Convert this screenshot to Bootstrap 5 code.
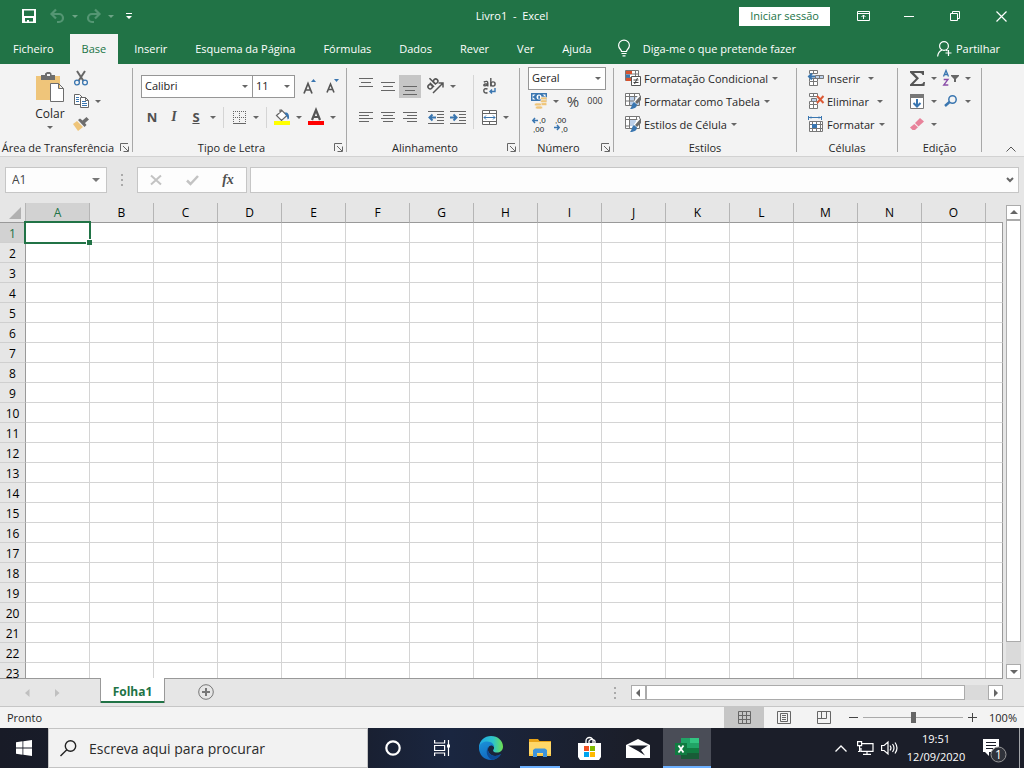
<!DOCTYPE html>
<html lang="pt">
<head>
<meta charset="utf-8">
<meta name="viewport" content="width=device-width, initial-scale=1">
<title>Livro1 - Excel</title>
<link href="https://cdn.jsdelivr.net/npm/bootstrap@5.3.0/dist/css/bootstrap.min.css" rel="stylesheet">
<style>
  :root { --xl-green: #217346; --xl-ribbon: #f3f3f3; --xl-grey: #e6e6e6; --xl-ink: #262626; }
  body { font-family: "Open Sans", "Noto Sans", sans-serif; font-size: 11px; line-height: 16px; color: var(--xl-ink); background: var(--xl-grey); overflow: hidden; }
  button, input, select { font: inherit; color: inherit; border: 0; padding: 0; background: none; }
  button:focus-visible { outline: 1px solid #666; }
  svg { display: block; flex: none; overflow: visible; }

  /* title bar and ribbon tabs */
  .xl-title { display: grid; grid-template-columns: 1fr auto 1fr; height: 34px; background: var(--xl-green); color: #fff; }
  .xl-title > * { height: 32px; }
  .xl-quick { padding-left: 18px; gap: 1px; }
  .xl-quick .xl-drop { opacity: .5; }
  .xl-quick .xl-drop::after { border-top-color: #b9d5c5; }
  .xl-undo { margin-left: 5px; }
  .xl-signin { width: 91px; height: 19px; margin-right: 10px; background: #fff; color: var(--xl-green); }
  .xl-win { width: 46px; height: 32px; display: grid; place-items: center; }
  .xl-tabs { height: 30px; background: var(--xl-green); color: #fff; padding-left: 1px; }
  .xl-tabs .nav-link { color: #fff; padding: 0 12px; line-height: 30px; margin-right: 4px; border-radius: 0; }
  .xl-tabs .nav-link.active { background: var(--xl-ribbon); color: var(--xl-green); }
  .xl-tellbox { gap: 13px; margin-left: 10px; }
  .xl-tell { width: 180px; color: #fff; }
  .xl-tell::placeholder { color: #fff; opacity: 1; }

  /* ribbon */
  .xl-ribbon { height: 93px; background: var(--xl-ribbon); border-bottom: 1px solid #d2d2d2; }
  .xl-ribbon .vr { background: #a8a8a8; opacity: 1; width: 1px; min-height: 0; }
  .xl-group { display: flex; flex-direction: column; height: 92px; padding-top: 3px; }
  .xl-group > .xl-body { height: 73px; padding-left: 8px; }
  .xl-group > .xl-body.inset { padding-left: 11px; }
  .xl-group > .xl-body.clip { padding-left: 33px; gap: 1px; }
  .xl-two { padding-top: 8px; gap: 8px; }
  .xl-row { display: flex; height: 23px; align-items: center; }
  .xl-cap { display: flex; height: 16px; text-align: center; }
  .xl-cap button { width: 16px; display: grid; place-items: center; }
  .w-clip { width: 132px; } .w-font { width: 213px; } .w-align { width: 172px; } .w-num { width: 93px; }
  .w-style { width: 182px; } .w-cell { width: 100px; } .w-edit { width: 83px; }
  .xl-tool { width: 22px; height: 23px; display: grid; place-items: center; flex: none; }
  .xl-tool.picked { background: #c6c6c6; }
  .xl-drop { width: 12px; height: 23px; display: grid; place-items: center; flex: none; }
  .xl-drop::after, .xl-caret::after { content: ""; display: block; border: solid transparent; border-width: 3px 3px 0; border-top-color: #666; }
  .xl-text { display: flex; align-items: center; gap: 3px; height: 23px; white-space: nowrap; }
  .xl-text span { padding-top: 2px; padding-right: 1px; }
  .xl-line { width: 1px; height: 21px; background: #d5d5d5; margin: 0 4px; }
  .xl-line.tall { height: 54px; margin-top: 8px; }
  .xl-combo { height: 23px; border: 1px solid #969696; border-radius: 0; padding: 0 0 0 3px; appearance: none; line-height: 20px; color: #222;
    background: #fff url("data:image/svg+xml,%3Csvg xmlns='http://www.w3.org/2000/svg' width='6' height='3'%3E%3Cpath d='M0 0h6L3 3z' fill='%23666'/%3E%3C/svg%3E") no-repeat right 4px center; }
  .c-face { width: 112px; } .c-size { width: 42px; } .c-num { width: 78px; }
  .glyph { font-size: 13px; font-weight: 700; color: #505050; }
  .g-ital { font-family: "Liberation Serif", serif; font-style: italic; font-size: 14px; }
  .g-pct { font-size: 15px; color: #444; }
  .g-sep { font-size: 9px; color: #333; }
  .g-dec { font-family: "Liberation Sans", sans-serif; font-size: 8px; fill: #222; }
  .xl-paste { width: 34px; font-size: 12px; padding-top: 5px; margin-right: 2px; }

  /* formula bar */
  .xl-fbar { height: 46px; padding: 10px 5px 10px; gap: 3px; }
  .xl-box { height: 26px; background: #fdfdfd; border: 1px solid #c6c6c6; display: flex; align-items: center; }
  .xl-box button { width: 36px; height: 24px; display: grid; place-items: center; }
  .xl-box input { min-width: 0; }
  .xl-name { width: 102px; font-size: 12px; padding-left: 6px; color: #444; }
  .xl-box .xl-drop { width: 20px; }
  .xl-name .xl-drop::after { border-width: 4px 4px 0; border-top-color: #777; }
  .xl-grip { margin: 0 11px; }

  /* sheet */
  .xl-main { min-height: 0; }
  .xl-sheet { min-height: 0; overflow: hidden; border-bottom: 1px solid #999; background: #fff; }
  .xl-grid { width: 100%; table-layout: fixed; border-collapse: separate; border-spacing: 0; font-size: 12px; line-height: 16px; color: #000; }
  .xl-rowcol { width: 26px; }
  .xl-datacol { width: 64px; }
  .xl-grid th { font-weight: 400; text-align: center; padding: 2px 0 0; background: var(--xl-grey); height: 20px; }
  .xl-grid thead th { border-right: 1px solid #b5b5b5; border-bottom: 1px solid #999; }
  .xl-grid thead th:last-child { border-right: 0; }
  .xl-grid tbody th { border-right: 1px solid #999; border-bottom: 1px solid #cfcfcf; padding-top: 3px; }
  .xl-grid td { height: 20px; padding: 0; background: #fff; border-right: 1px solid #d4d4d4; border-bottom: 1px solid #d4d4d4; position: relative; }
  .xl-grid td:last-child { border-right-color: #999; }
  .xl-grid th.hot { background: #d2d2d2; color: var(--xl-green); }
  .xl-cursor { position: absolute; inset: -2px; border: 2px solid var(--xl-green); z-index: 1; }
  .xl-cursor::after { content: ""; position: absolute; right: -3px; bottom: -3px; width: 6px; height: 6px; background: var(--xl-green); border: solid #fff; border-width: 1px 0 0 1px; }
  .xl-vscroll { width: 15px; margin: 2px 3px 0 3px; }
  .xl-sb { width: 15px; height: 15px; background: #fff; border: 1px solid #ababab; display: grid; place-items: center; flex: none; }
  .xl-thumb { background: #fff; border: 1px solid #ababab; flex: 19 1 0; }
  .xl-track { background: #dadada; flex: 1 1 0; }

  .xl-sheets { height: 28px; border-bottom: 1px solid #c6c6c6; }
  .xl-nav { padding-left: 25px; }
  .xl-sheettab { width: 65px; height: 25px; margin: -1px 33px 0 40px; padding-top: 2px; background: #fff; border: solid #999; border-width: 0 1px; box-shadow: inset 0 -2px var(--xl-green); color: var(--xl-green); font-size: 12px; font-weight: 700; position: relative; }
  .xl-newsheet { padding-bottom: 2px; }
  .xl-hscroll { width: 38%; margin-right: 21px; height: 27px; }
  .xl-hscroll .xl-thumb, .xl-hscroll .xl-track { height: 15px; }
  .xl-hscroll .xl-thumb { flex-grow: 14; }
  .xl-hgrip { margin-right: 15px; }
  .xl-status { height: 21px; background: var(--xl-ribbon); padding: 0 7px; }
  .xl-view { width: 40px; height: 21px; display: grid; place-items: center; }
  .xl-view.picked { background: #c6c6c6; }
  .xl-less { margin-left: 5px; }
  .xl-zoom { width: 100px; height: 21px; appearance: none; margin: 0 5px 0 4px; }
  .xl-zoom::-webkit-slider-runnable-track { height: 1px; background: #aaa; }
  .xl-zoom::-webkit-slider-thumb { appearance: none; width: 5px; height: 11px; margin-top: -5px; background: #666; }

  /* task bar */
  .os-bar { height: 40px; background: linear-gradient(90deg, #181b27 0, #192032 36%, #1a2640 44%, #1b1e29 62%); color: #fff; }
  .os-apps { gap: 1px; padding-left: 1px; }
  .os-btn { width: 48px; height: 40px; display: grid; place-items: center; position: relative; }
  .os-btn.open { background: linear-gradient(#6cb0ff, #6cb0ff) center bottom / 40px 2px no-repeat; }
  .os-btn.front { background: linear-gradient(#6cb0ff, #6cb0ff) center bottom / 48px 2px no-repeat, #4a4d57; }
  .os-search { width: 320px; height: 40px; background: #f2f2f2; border: 1px solid #c3c3c3; color: #222; padding-left: 11px; padding-top: 1px; }
  .os-search input { font-size: 14px; outline: 0; }
  .os-search input::placeholder { color: #2b2b2b; opacity: 1; }
  .os-tray { width: 24px; height: 40px; display: grid; place-items: center; }
  .os-clock { width: 70px; line-height: 18px; text-align: center; }
  .os-edge { height: 40px; margin: 0 4px 0 0; opacity: .6; }
</style>
</head>
<body class="d-flex flex-column vh-100">

<header class="xl-title">
  <div class="xl-quick d-flex align-items-center">
    <button class="xl-tool" aria-label="Guardar"><svg width="14" height="14"><path fill="#fff" fill-rule="evenodd" d="M0 0h14v14H0zM2 1.500V7h10V1.500zM3 9v3.500h2V11h2v1.500h4V9z"/></svg></button>
    <button class="xl-tool xl-undo" aria-label="Anular"><svg width="15" height="14" fill="none" stroke="#549673" stroke-width="2.200"><path d="M1.500 5H9a4 4 0 0 1 0 8H7M6 .5L1.500 5 6 9.500"/></svg></button>
    <button class="xl-drop" aria-label="Opções de anular"></button>
    <button class="xl-tool" aria-label="Refazer"><svg width="15" height="14" fill="none" stroke="#549673" stroke-width="2.200"><path d="M13.500 5H6a4 4 0 0 0 0 8h2M9 .5L13.500 5 9 9.500"/></svg></button>
    <button class="xl-drop" aria-label="Opções de refazer"></button>
    <button class="xl-tool" aria-label="Personalizar"><svg width="6" height="7" fill="#fff"><path d="M0 0h6v1H0zM0 3h6L3 6z"/></svg></button>
  </div>
  <div class="d-flex align-items-center">Livro1&nbsp; -&nbsp; Excel</div>
  <div class="d-flex align-items-center justify-content-end">
    <button class="xl-signin">Iniciar sessão</button>
    <button class="xl-win" aria-label="Opções do friso"><svg width="13" height="10" fill="none" stroke="#fff"><path d="M.5.5h12v9H.5zM1 2.500h11M6.500 8V4M4.500 6l2-2 2 2"/></svg></button>
    <button class="xl-win" aria-label="Minimizar"><svg width="10" height="1"><path fill="#fff" d="M0 0h10v1H0z"/></svg></button>
    <button class="xl-win" aria-label="Restaurar"><svg width="10" height="10" fill="none" stroke="#fff"><path d="M.5 2.500h7v7h-7zM2.500 2V.5h7v7H8"/></svg></button>
    <button class="xl-win" aria-label="Fechar"><svg width="11" height="11" stroke="#fff" stroke-width="1.200"><path d="M.5.5l10 10M10.500.5l-10 10"/></svg></button>
  </div>
</header>

<nav class="xl-tabs d-flex align-items-center" aria-label="Friso">
  <a class="nav-link" href="#">Ficheiro</a>
  <a class="nav-link active" href="#">Base</a>
  <a class="nav-link" href="#">Inserir</a>
  <a class="nav-link" href="#">Esquema da Página</a>
  <a class="nav-link" href="#">Fórmulas</a>
  <a class="nav-link" href="#">Dados</a>
  <a class="nav-link" href="#">Rever</a>
  <a class="nav-link" href="#">Ver</a>
  <a class="nav-link" href="#">Ajuda</a>
  <label class="xl-tellbox d-flex align-items-center">
    <svg width="12" height="17" fill="none" stroke="#fff" stroke-width="1.200"><path d="M3.500 11.500c0-2-2.900-2.800-2.900-6a5.400 5.400 0 0 1 10.800 0c0 3.200-2.900 4-2.900 6zM3.500 13.500h5M4.500 15.800h3"/></svg>
    <input class="xl-tell" type="text" placeholder="Diga-me o que pretende fazer">
  </label>
  <button class="d-flex align-items-center gap-1 ms-auto me-4"><svg width="15" height="16" fill="none" stroke="#fff" stroke-width="1.200"><circle cx="7" cy="5" r="4.400"/><path d="M.6 15.500C1 12 2.600 10 5 9M9 9l1.500 1M11.500 9v6M8.500 12h6"/></svg>Partilhar</button>
</nav>

<section class="xl-ribbon d-flex">
  <div class="xl-group w-clip">
    <div class="xl-body clip d-flex">
      <button class="xl-paste d-flex flex-column align-items-center">
        <svg width="28" height="30"><path fill="#efc57a" d="M0 4h24v24H0z"/><path fill="#6d6d6d" d="M5 3h4V1.500L11 0h3l1.500 1.500V3H19v5H5z"/><path fill="#f3f3f3" d="M11 2h3v2h-3z"/><path fill="#fff" stroke="#6d6d6d" d="M14.500 11.500h8l5 5v13h-13zM22.500 11.500v5h5"/></svg>
        <span class="pt-1">Colar</span><span class="xl-caret pt-1"></span>
      </button>
      <div>
        <div class="xl-row"><button class="xl-tool" aria-label="Cortar"><svg width="14" height="15" fill="none"><path stroke="#666" stroke-width="2" d="M3 0l6.500 10M11 0L4.500 10"/><circle cx="3" cy="11.500" r="2.400" stroke="#3a76b0" stroke-width="1.300"/><circle cx="11" cy="11.500" r="2.400" stroke="#3a76b0" stroke-width="1.300"/></svg></button></div>
        <div class="xl-row"><button class="xl-tool" aria-label="Copiar"><svg width="15" height="14" fill="#fff" stroke="#666"><path d="M.5.5h5l3 3v7h-8z"/><path d="M6.500 3.500h5l3 3v7h-8zM11.500 3.500v3h3"/><path stroke="#3a76b0" d="M2 3.500h3M2 5.500h3M2 7.500h3M8 7.500h4M8 9.500h5M8 11.500h5"/></svg></button><button class="xl-drop" aria-label="Opções de copiar"></button></div>
        <div class="xl-row"><button class="xl-tool" aria-label="Pincel de formatação"><svg width="16" height="14"><path fill="#efc57a" d="M0 7l4-3 6 6-5 4z"/><path fill="#6d6d6d" d="M5 3l2-1.500 2.500 2L13.500 0 16 2.500 12 6l1.500 2-2 2z"/></svg></button></div>
      </div>
    </div>
    <div class="xl-cap"><span class="flex-fill">Área de Transferência</span><button aria-label="Mais"><svg width="9" height="9" fill="none" stroke="#666"><path d="M.5 8V.5H8M3 3l5 5M8.500 3.500v5h-5"/></svg></button></div>
  </div>
  <div class="vr my-1"></div>

  <div class="xl-group w-font">
    <div class="xl-body xl-two d-flex flex-column">
      <div class="xl-row">
        <select class="xl-combo c-face" aria-label="Tipo de letra"><option>Calibri</option></select>
        <select class="xl-combo c-size border-start-0" aria-label="Tamanho"><option>11</option></select>
        <button class="xl-tool ms-1" aria-label="Aumentar"><svg width="14" height="15"><path fill="none" stroke="#555" stroke-width="1.700" d="M1 14.500L5 4.500l4 10M2.500 11h5"/><path fill="#3a76b0" d="M8 3l2.500-3L13 3z"/></svg></button>
        <button class="xl-tool" aria-label="Diminuir"><svg width="13" height="14"><path fill="none" stroke="#555" stroke-width="1.600" d="M1 13.500L4.500 5l3.500 8.500M2.300 10.500h4.400"/><path fill="#3a76b0" d="M8 0h5l-2.500 3z"/></svg></button>
      </div>
      <div class="xl-row">
        <button class="xl-tool glyph">N</button><button class="xl-tool glyph g-ital">I</button><button class="xl-tool glyph text-decoration-underline">S</button><button class="xl-drop" aria-label="Sublinhado"></button>
        <div class="xl-line"></div>
        <button class="xl-tool" aria-label="Limites"><svg width="13" height="13" fill="none" stroke="#666"><path stroke-dasharray="1 1" d="M0 .5h13M.5 0v13M6.500 0v13M12.500 0v13M0 6.500h13"/><path d="M0 12.500h13"/></svg></button><button class="xl-drop" aria-label="Opções de limites"></button>
        <div class="xl-line"></div>
        <button class="xl-tool" aria-label="Cor de preenchimento"><svg width="16" height="16"><path fill="#fff" stroke="#666" stroke-width="1.200" d="M2.500 6.500L8 1.500l5 5-5.500 5zM6 4V1h2"/><path fill="#3a76b0" d="M10.500 3.500c3-.5 5 1 4.500 6l-1.500 1c0-2-.5-3-1.500-4z"/><path fill="#ff0" d="M0 12h16v4H0z"/></svg></button><button class="xl-drop" aria-label="Cores de preenchimento"></button>
        <button class="xl-tool" aria-label="Cor do tipo de letra"><svg width="16" height="16"><path fill="none" stroke="#555" stroke-width="2.200" d="M4 11L8 1l4 10M5.500 8h5"/><path fill="red" d="M0 12h16v4H0z"/></svg></button><button class="xl-drop" aria-label="Cores de letra"></button>
      </div>
    </div>
    <div class="xl-cap"><span class="flex-fill">Tipo de Letra</span><button aria-label="Mais"><svg width="9" height="9" fill="none" stroke="#666"><path d="M.5 8V.5H8M3 3l5 5M8.500 3.500v5h-5"/></svg></button></div>
  </div>
  <div class="vr my-1"></div>

  <div class="xl-group w-align">
    <div class="xl-body d-flex">
      <div class="xl-two d-flex flex-column">
        <div class="xl-row">
          <button class="xl-tool" aria-label="Alinhar em cima"><svg width="14" height="17" stroke="#666"><path d="M0 .5h14M2 4.500h10M0 8.500h14"/></svg></button>
          <button class="xl-tool" aria-label="Alinhar ao meio"><svg width="14" height="9" stroke="#666"><path d="M0 .5h14M2 4.500h10M0 8.500h14"/></svg></button>
          <button class="xl-tool picked" aria-label="Alinhar em baixo"><svg width="14" height="17" stroke="#666"><path d="M0 8.500h14M2 12.500h10M0 16.500h14"/></svg></button>
          <button class="xl-tool ms-1" aria-label="Orientação"><svg width="17" height="16" fill="none" stroke="#555" stroke-width="1.500"><path d="M5 15L14.500 5.500M10.500 5h4.500v4.500"/><g transform="rotate(-45 5 8)"><circle cx="2.500" cy="6.500" r="2.200"/><path d="M5 3.500v6M8 0v9"/><circle cx="10.300" cy="6.500" r="2.200"/></g></svg></button><button class="xl-drop" aria-label="Orientações"></button>
        </div>
        <div class="xl-row">
          <button class="xl-tool" aria-label="Esquerda"><svg width="14" height="11" stroke="#666"><path d="M0 .5h14M0 3.500h10M0 6.500h14M0 9.500h10"/></svg></button>
          <button class="xl-tool" aria-label="Centro"><svg width="14" height="11" stroke="#666"><path d="M0 .5h14M2 3.500h10M0 6.500h14M2 9.500h10"/></svg></button>
          <button class="xl-tool" aria-label="Direita"><svg width="14" height="11" stroke="#666"><path d="M0 .5h14M4 3.500h10M0 6.500h14M4 9.500h10"/></svg></button>
          <button class="xl-tool ms-1" aria-label="Diminuir avanço"><svg width="16" height="13" stroke="#666"><path d="M0 .5h16M9 3.500h7M9 6.500h7M9 9.500h7M0 12.500h16"/><path fill="none" stroke="#3a76b0" stroke-width="2" d="M8 6.500H1.500M4.500 3.500l-3 3 3 3"/></svg></button>
          <button class="xl-tool" aria-label="Aumentar avanço"><svg width="16" height="13" stroke="#666"><path d="M0 .5h16M9 3.500h7M9 6.500h7M9 9.500h7M0 12.500h16"/><path fill="none" stroke="#3a76b0" stroke-width="2" d="M0 6.500h6.500M3.500 3.500l3 3-3 3"/></svg></button>
        </div>
      </div>
      <div class="xl-line tall"></div>
      <div class="xl-two d-flex flex-column">
        <div class="xl-row"><button class="xl-tool" aria-label="Moldar texto"><svg width="13" height="16" fill="none" stroke="#555" stroke-width="1.400"><path d="M.8 4Q4.800 2.300 4.800 5V8.500M4.800 5.800Q.8 5.800.8 7.200T4.800 7.200M7.800 0v8.500"/><circle cx="10" cy="6" r="2.100"/><path d="M4.500 11Q.8 10 .8 12.800T4.500 14.800"/><path stroke="#3a76b0" d="M12 10v3.500H7M9 11.500l-2 2 2 2"/></svg></button></div>
        <div class="xl-row"><button class="xl-tool" aria-label="Unir"><svg width="15" height="15" fill="#fff" stroke="#666"><path d="M.5.5h14v14H.5zM0 3.500h15M0 11.500h15M7.500 0v3M7.500 12v3"/><path fill="none" stroke="#3a76b0" d="M2 7.500h11M4 5.500l-2 2 2 2M11 5.500l2 2-2 2"/></svg></button><button class="xl-drop" aria-label="Opções de unir"></button></div>
      </div>
    </div>
    <div class="xl-cap"><span class="flex-fill">Alinhamento</span><button aria-label="Mais"><svg width="9" height="9" fill="none" stroke="#666"><path d="M.5 8V.5H8M3 3l5 5M8.500 3.500v5h-5"/></svg></button></div>
  </div>
  <div class="vr my-1"></div>

  <div class="xl-group w-num">
    <div class="xl-body">
      <div class="xl-row"><select class="xl-combo c-num" aria-label="Formato"><option>Geral</option></select></div>
      <div class="xl-row">
        <button class="xl-tool" aria-label="Moeda"><svg width="16" height="16"><path fill="#3a76b0" d="M0 0h16v8H0z"/><path fill="#fff" d="M1.500 1.500h3l-3 2.500zM14.500 1.500h-3l3 2.500zM1.500 6.500V4l3 2.500z"/><circle cx="8" cy="4" r="2.500" fill="#fff"/><path fill="#3a76b0" d="M7.300 2.800h1.700v3H7.300z"/><g fill="#efc57a" stroke="#f3f3f3" stroke-width=".6"><rect x="9.500" y="4" width="6.500" height="3" rx="1.500"/><rect x="9.500" y="6.800" width="6.500" height="3" rx="1.500"/><rect x="9.500" y="9.600" width="6.500" height="3" rx="1.500"/><rect x="3.500" y="10" width="7" height="3" rx="1.500"/><rect x="4.500" y="13" width="7" height="3" rx="1.500"/></g></svg></button><button class="xl-drop" aria-label="Moedas"></button>
        <button class="xl-tool g-pct">%</button><button class="xl-tool g-sep">000</button>
      </div>
      <div class="xl-row">
        <button class="xl-tool" aria-label="Aumentar casas decimais"><svg class="g-dec" width="15" height="15"><text x="7" y="6">,0</text><text x="1" y="15">,00</text><path fill="none" stroke="#3a76b0" stroke-width="1.500" d="M6 3.500H1M3 1L.8 3.500 3 6"/></svg></button>
        <button class="xl-tool" aria-label="Diminuir casas decimais"><svg class="g-dec" width="15" height="15"><text x="1" y="6">,00</text><text x="7" y="15">,0</text><path fill="none" stroke="#3a76b0" stroke-width="1.500" d="M0 10.500h5M3 8l2.200 2.500L3 13"/></svg></button>
      </div>
    </div>
    <div class="xl-cap"><span class="flex-fill">Número</span><button aria-label="Mais"><svg width="9" height="9" fill="none" stroke="#666"><path d="M.5 8V.5H8M3 3l5 5M8.500 3.500v5h-5"/></svg></button></div>
  </div>
  <div class="vr my-1"></div>

  <div class="xl-group w-style">
    <div class="xl-body inset">
      <button class="xl-text xl-caret"><svg width="16" height="16"><path fill="#fff" stroke="#777" d="M.5.5h13v10H.5zM0 4h14M0 7.500h14"/><path fill="#d8522e" d="M1 1h6v3H1z"/><path fill="#3a76b0" d="M1 4.500h4v3H1z"/><path fill="#d8522e" d="M1 8h5v3H1z"/><path stroke="#777" d="M10.500 0v6"/><path fill="#fff" stroke="#555" d="M6.500 6.500h9v9h-9z"/><path stroke="#444" d="M8.500 10h5M8.500 12.500h5M12.500 8l-3 6"/></svg><span>Formatação Condicional</span></button>
      <button class="xl-text xl-caret"><svg width="16" height="16"><path fill="#fff" stroke="#777" d="M.5.5h14v12H.5z"/><path fill="#bcd0ea" d="M4 4h10v8H4z"/><path stroke="#777" d="M0 3.500h15M0 8h15M4.500 0v13M9.500 0v13"/><path stroke="#fff" stroke-width="4" d="M15 3l-6 9"/><path fill="#6d6d6d" d="M16 2v5l-4 4-2-2z"/><path fill="#3a76b0" d="M9 9l3 2.500c0 3-3 4.500-7 4.500 2-1.500 1.500-5.500 4-7z"/></svg><span>Formatar como Tabela</span></button>
      <button class="xl-text xl-caret"><svg width="16" height="16"><path fill="#fff" stroke="#777" d="M.5.5h14v12H.5z"/><path fill="#bcd0ea" d="M4 4h7v6H4z"/><path fill="none" stroke="#777" d="M0 3.500h15M4.500 0v13M0 10h5M11.500 0v4"/><path stroke="#fff" stroke-width="4" d="M15 3l-6 9"/><path fill="#6d6d6d" d="M16 2v5l-4 4-2-2z"/><path fill="#3a76b0" d="M9 9l3 2.500c0 3-3 4.500-7 4.500 2-1.500 1.500-5.500 4-7z"/></svg><span>Estilos de Célula</span></button>
    </div>
    <div class="xl-cap"><span class="flex-fill">Estilos</span></div>
  </div>
  <div class="vr my-1"></div>

  <div class="xl-group w-cell">
    <div class="xl-body inset">
      <div class="xl-row"><button class="xl-text"><svg width="16" height="16" fill="#fff" stroke="#777"><path d="M1.500.5h8v3h-8zM5.500 0v3M1.500 11.500h8v4h-8zM5.500 9v6M1.500 11V8.500h8V11"/><path fill="#bcd0ea" d="M7.500 5.500h8v3h-8zM11.500 5.500v3"/><path fill="none" stroke="#3a76b0" stroke-width="2" d="M7 6.500H1M4 3.500l-3 3 3 3"/></svg><span>Inserir</span></button><button class="xl-drop ms-1" aria-label="Opções de inserir"></button></div>
      <div class="xl-row"><button class="xl-text"><svg width="16" height="16" fill="#fff" stroke="#777"><path d="M1.500.5h8v3h-8zM5.500 0v3M1.500 11.500h8v4h-8zM5.500 9v6M1.500 11V8.500h8V11"/><path fill="#bcd0ea" d="M3.500 5.500h5v3h-5z"/><path stroke="#dc5a36" stroke-width="2" d="M9 3l6.500 7M15.500 3L9 10"/></svg><span>Eliminar</span></button><button class="xl-drop ms-1" aria-label="Opções de eliminar"></button></div>
      <button class="xl-text xl-caret"><svg width="16" height="16" fill="#fff" stroke="#777"><path d="M1.500 5.500h13v10h-13zM1 8.500h14M1 12.500h14M4.500 5v11M8.500 5v11M12.500 5v11"/><path fill="#3a76b0" stroke="none" d="M4 8h5v4H4z"/><path fill="none" stroke="#3a76b0" d="M.5 0v4M13.500 0v4M1 1.500h12M3 .5l-1 1 1 1M11 .5l1 1-1 1"/></svg><span>Formatar</span></button>
    </div>
    <div class="xl-cap"><span class="flex-fill">Células</span></div>
  </div>
  <div class="vr my-1"></div>

  <div class="xl-group w-edit">
    <div class="xl-body">
      <div class="xl-row"><button class="xl-tool" aria-label="Soma"><svg width="15" height="15"><path fill="#555" d="M0 0h14v4h-1.500Q12 2 10 2H4l5 5.200L3.500 13H11q2 0 2.500-2H15l-.5 4H0v-1.500l6-6-6-6z"/></svg></button><button class="xl-drop" aria-label="Opções de soma"></button>
        <button class="xl-tool" aria-label="Ordenar e filtrar"><svg width="16" height="16" fill="none" stroke-width="1.300"><path stroke="#3a76b0" d="M.5 6.500L3 .5l2.500 6M1.500 4.500h3"/><path stroke="#8a4da8" d="M.7 9.500h4.300l-4.300 5.500h4.600"/><path fill="#666" d="M8 5h8v1l-3 3v3h-2V9L8 6z"/></svg></button><button class="xl-drop" aria-label="Opções de ordenação"></button></div>
      <div class="xl-row"><button class="xl-tool" aria-label="Preencher"><svg width="14" height="15"><path fill="#fff" stroke="#777" d="M.5.5h13v14H.5z"/><path fill="#777" d="M0 0h14v4H0z"/><path fill="none" stroke="#3a76b0" stroke-width="2" d="M7 5v7.500M3.500 9L7 12.500 10.500 9"/></svg></button><button class="xl-drop" aria-label="Opções de preencher"></button>
        <button class="xl-tool" aria-label="Localizar"><svg width="14" height="12" fill="none" stroke="#3a76b0"><circle cx="8.500" cy="4.500" r="3.700" stroke-width="1.500"/><path stroke-width="2.500" d="M5.500 7L1 11"/></svg></button><button class="xl-drop" aria-label="Opções de localizar"></button></div>
      <div class="xl-row"><button class="xl-tool" aria-label="Limpar"><svg width="14" height="13"><path fill="#e8829a" d="M5 5l5-5 4 3.500-5.500 5z"/><path fill="#e8829a" d="M4.300 6L8 9.200 5 12H2.500L0 9.500z"/></svg></button><button class="xl-drop" aria-label="Opções de limpar"></button></div>
    </div>
    <div class="xl-cap"><span class="flex-fill">Edição</span></div>
  </div>
  <div class="vr my-1"></div>
  <button class="ms-auto me-2 mt-auto pb-1" aria-label="Fechar friso"><svg width="10" height="6" fill="none" stroke="#555"><path d="M.5 5.500L5 1l4.500 4.500"/></svg></button>
</section>

<section class="xl-fbar d-flex align-items-center">
  <div class="xl-box xl-name"><input class="flex-fill" value="A1" aria-label="Caixa de nome"><button class="xl-drop" aria-label="Nomes"></button></div>
  <svg class="xl-grip" width="2" height="12" fill="#aaa"><path d="M0 0h2v2H0zM0 5h2v2H0zM0 10h2v2H0z"/></svg>
  <div class="xl-box">
    <button aria-label="Cancelar"><svg width="12" height="10" stroke="#c3c3c3" stroke-width="2"><path d="M1 .5l10 9M11 .5L1 9.500"/></svg></button>
    <button aria-label="Introduzir"><svg width="13" height="10" fill="none" stroke="#c3c3c3" stroke-width="2.500"><path d="M1 5.500L4.500 9 12 1"/></svg></button>
    <button class="glyph g-ital" aria-label="Inserir função">fx</button>
  </div>
  <div class="xl-box flex-fill"><input class="flex-fill px-2" aria-label="Barra de fórmulas"><svg class="me-1" width="8" height="6" fill="none" stroke="#666" stroke-width="2"><path d="M1 1l3 3 3-3"/></svg></div>
</section>

<main class="xl-main flex-fill d-flex">
  <div class="xl-sheet flex-fill">
    <table class="xl-grid">
      <colgroup id="cols"><col class="xl-rowcol"></colgroup>
      <thead><tr id="head"><th aria-label="Selecionar tudo"><svg class="ms-auto me-1" width="12" height="12"><path fill="#b1b1b1" d="M12 0v12H0z"/></svg></th></tr></thead>
      <tbody id="rows"></tbody>
    </table>
  </div>
  <div class="xl-vscroll d-flex flex-column">
    <button class="xl-sb" aria-label="Subir"><svg width="8" height="4"><path fill="#666" d="M0 4l4-4 4 4z"/></svg></button>
    <div class="xl-thumb"></div>
    <div class="xl-track"></div>
    <button class="xl-sb" aria-label="Descer"><svg width="8" height="4"><path fill="#666" d="M0 0l4 4 4-4z"/></svg></button>
  </div>
</main>

<section class="xl-sheets d-flex">
  <button class="xl-nav" aria-label="Folha anterior"><svg width="5" height="8"><path fill="#c0c0c0" d="M4.500 0v8L0 4z"/></svg></button>
  <button class="xl-nav" aria-label="Folha seguinte"><svg width="5" height="8"><path fill="#c0c0c0" d="M0 0v8l4.500-4z"/></svg></button>
  <button class="xl-sheettab">Folha1</button>
  <button class="xl-newsheet" aria-label="Nova folha"><svg width="16" height="16" fill="none" stroke="#777"><circle cx="8" cy="8" r="7.300"/><path stroke-width="2" d="M8 4v8M4 8h8"/></svg></button>
  <div class="xl-hscroll d-flex align-items-center ms-auto">
    <svg class="xl-hgrip" width="2" height="12" fill="#aaa"><path d="M0 0h2v2H0zM0 5h2v2H0zM0 10h2v2H0z"/></svg>
    <button class="xl-sb" aria-label="Esquerda"><svg width="4" height="8"><path fill="#666" d="M4 0v8L0 4z"/></svg></button>
    <div class="xl-thumb"></div>
    <div class="xl-track"></div>
    <button class="xl-sb" aria-label="Direita"><svg width="4" height="8"><path fill="#666" d="M0 0v8l4-4z"/></svg></button>
  </div>
</section>

<footer class="xl-status d-flex align-items-center">
  <span class="me-auto">Pronto</span>
  <button class="xl-view picked" aria-label="Normal"><svg width="13" height="13" fill="none" stroke="#666"><path d="M.5.5h12v12H.5zM4.500 0v13M8.500 0v13M0 4.500h13M0 8.500h13"/></svg></button>
  <button class="xl-view" aria-label="Esquema de página"><svg width="14" height="13" fill="none" stroke="#666"><path d="M.5.5h13v12H.5zM3.500 2.500h7v8h-7zM5 4.500h4M5 6.500h4M5 8.500h4"/></svg></button>
  <button class="xl-view" aria-label="Quebras de página"><svg width="14" height="13" fill="none" stroke="#666"><path d="M.5.5h13v12H.5zM4.500 0v7.500M9.500 0v7.500M0 7.500h9.500"/></svg></button>
  <button class="xl-less" aria-label="Reduzir"><svg width="10" height="9" stroke="#444"><path d="M0 4.500h9"/></svg></button>
  <input class="xl-zoom" type="range" min="0" max="100" value="50" aria-label="Zoom">
  <button aria-label="Ampliar"><svg width="9" height="9" stroke="#444"><path d="M0 4.500h9M4.500 0v9"/></svg></button>
  <span class="ms-2 ps-1">100%</span>
</footer>

<nav class="os-bar d-flex" aria-label="Barra de tarefas">
  <button class="os-btn" aria-label="Iniciar"><svg width="16" height="16" fill="#fff"><path d="M0 2.200L6.500 1.300V7.600H0zM7.300 1.200L16 0v7.600H7.300zM0 8.400h6.500v6.300L0 13.800zM7.300 8.400H16V16l-8.700-1.200z"/></svg></button>
  <label class="os-search d-flex align-items-center gap-2">
    <svg class="me-1" width="17" height="17" fill="none" stroke="#222" stroke-width="1.400"><circle cx="10.500" cy="6" r="5.200"/><path d="M6.800 9.800L.5 16"/></svg>
    <input class="flex-fill" type="search" placeholder="Escreva aqui para procurar">
  </label>
  <div class="os-apps d-flex">
    <button class="os-btn" aria-label="Cortana"><svg width="16" height="16" fill="none" stroke="#fff" stroke-width="2.200"><circle cx="8" cy="8" r="6.700"/></svg></button>
    <button class="os-btn" aria-label="Vista de tarefas"><svg width="16" height="16" fill="none" stroke="#fff" stroke-width="1.200"><path d="M.6 0v3h10V0M.6 16v-3h10v3M.6 5.500h10v5H.6zM14.500 0v16"/><path fill="#fff" stroke="none" d="M13 4.500h3v3h-3z"/></svg></button>
    <button class="os-btn" aria-label="Edge"><svg width="24" height="24" viewBox="0 0 24 24"><defs><linearGradient id="eg" x1="0" x2="1"><stop offset="0" stop-color="#1fa8e6"/><stop offset=".6" stop-color="#2fc5c8"/><stop offset="1" stop-color="#6ee04f"/></linearGradient><linearGradient id="eb" y1="0" y2="1" x2=".5"><stop offset="0" stop-color="#1b93d8"/><stop offset="1" stop-color="#1166bf"/></linearGradient></defs><path fill="url(#eg)" d="M0 10.500C.8 4.500 5.500 0 12 0c7 0 12 5 12 10.500 0 4-3 6-6 6-3.500 0-4.500-1.500-3.500-3C16 11.500 14.500 8 10 8c-5 0-8 3-10 6z"/><path fill="url(#eb)" d="M0 12c0-4 4-6.500 8-6.500 5 0 7 3 7 5.500-1-1.700-3-2-4.500-1-2.500 2-2 7 2 9 3 1.700 6.500 1 9.500-1-2 3.500-5.500 6-10 6C5 24 0 18.500 0 12z"/><path fill="#0d4a94" d="M9.500 10.500C6.500 14 7 21 13 23.900c4-.4 7-2.700 9-5.900-3 2-6.500 2.700-9.500 1-3.500-2-4.500-6-3-8.500z"/></svg></button>
    <button class="os-btn open" aria-label="Explorador"><svg width="22" height="20"><path fill="#e8a317" d="M0 1h9l1.500 2H22v3H0z"/><path fill="#ffd768" d="M0 4h22v14H0z"/><path fill="#fbc844" d="M0 16h22v2H0z"/><path fill="#3d94dc" d="M4 19v-7l2-1.500h10l2 1.500v7h-4v-4H8v4z"/></svg></button>
    <button class="os-btn" aria-label="Loja"><svg width="23" height="23"><path fill="none" stroke="#fff" stroke-width="1.300" d="M8 6V4a3.500 3.500 0 0 1 7 0v2M11 6V4a3.500 3.500 0 0 1 6 0v2"/><path fill="#fff" d="M0 6h23v14l-2 3H2l-2-3z"/><path fill="#f25022" d="M6 9h5v5H6z"/><path fill="#7fba00" d="M12 9h5v5h-5z"/><path fill="#00a4ef" d="M6 15h5v5H6z"/><path fill="#ffb900" d="M12 15h5v5h-5z"/></svg></button>
    <button class="os-btn" aria-label="Correio"><svg width="24" height="19"><path fill="#fff" d="M0 6l12-6 12 6v13H0z"/><path fill="#1b1e29" d="M2 6.500h20L15 11l4 5.500L12 12z"/></svg></button>
    <button class="os-btn front" aria-label="Excel"><svg width="24" height="21"><path fill="#21a366" d="M6 0h9v10H6z"/><path fill="#33c481" d="M15 0h9v5h-9z"/><path fill="#21a366" d="M15 5h9v5h-9z"/><path fill="#107c41" d="M6 10h18v5H6z"/><path fill="#185c37" d="M6 15h18v6H6z"/><path fill="#107c41" d="M0 5h12v12H0z"/><path stroke="#fff" stroke-width="1.800" d="M3.500 7.500l5 7M8.500 7.500l-5 7"/></svg></button>
  </div>
  <div class="d-flex ms-auto align-items-center">
    <button class="os-tray" aria-label="Ícones ocultos"><svg width="12" height="7" fill="none" stroke="#fff" stroke-width="1.300"><path d="M.5 6.500L6 1l5.500 5.500"/></svg></button>
    <button class="os-tray" aria-label="Rede"><svg width="17" height="14" fill="none" stroke="#fff" stroke-width="1.200"><path d="M5 2.600h11v7.800H4V7M10 10.500v3M6 13.400h8M.6.600h4v4h-4zM2.600 4.500v6H1"/></svg></button>
    <button class="os-tray" aria-label="Volume"><svg width="17" height="14" fill="none" stroke="#fff" stroke-width="1.200"><path d="M.6 4.500h2.500L7 1v12L3.100 9.500H.6zM9 4.500q2 2.500 0 5M11.500 3q3 4 0 8M14 1.500q4 5.500 0 11"/></svg></button>
    <div class="os-clock">19:51<br>12/09/2020</div>
    <button class="os-btn" aria-label="Notificações"><svg width="24" height="18"><path fill="#fff" d="M0 0h16v13H6v4l-4-4H0z"/><path stroke="#1b1e29" d="M3 3.500h10M3 6.500h10M3 9.500h7"/><circle cx="15.500" cy="15.500" r="7.500" fill="#30333b" stroke="#999"/><text x="15.500" y="20" text-anchor="middle" font-size="12" fill="#fff">1</text></svg></button>
    <div class="vr os-edge"></div>
  </div>
</nav>

<script src="https://cdn.jsdelivr.net/npm/bootstrap@5.3.0/dist/js/bootstrap.bundle.min.js"></script>
<script>
  // Sheet grid: fifteen lettered columns, then one that takes the remaining width.
  const letters = [..."ABCDEFGHIJKLMNO"];
  cols.insertAdjacentHTML("beforeend", letters.map(() => '<col class="xl-datacol">').join("") + "<col>");
  head.insertAdjacentHTML("beforeend", letters.map((l, i) => `<th scope="col"${i ? "" : ' class="hot"'}>${l}</th>`).join("") + "<th></th>");
  for (let r = 1; r <= 23; r++) {
    rows.insertAdjacentHTML("beforeend", `<tr><th scope="row"${r > 1 ? "" : ' class="hot"'}>${r}</th>` +
      [...letters, ""].map((l, i) => `<td>${r === 1 && i === 0 ? '<div class="xl-cursor"></div>' : ""}</td>`).join("") + "</tr>");
  }
</script>
</body>
</html>
